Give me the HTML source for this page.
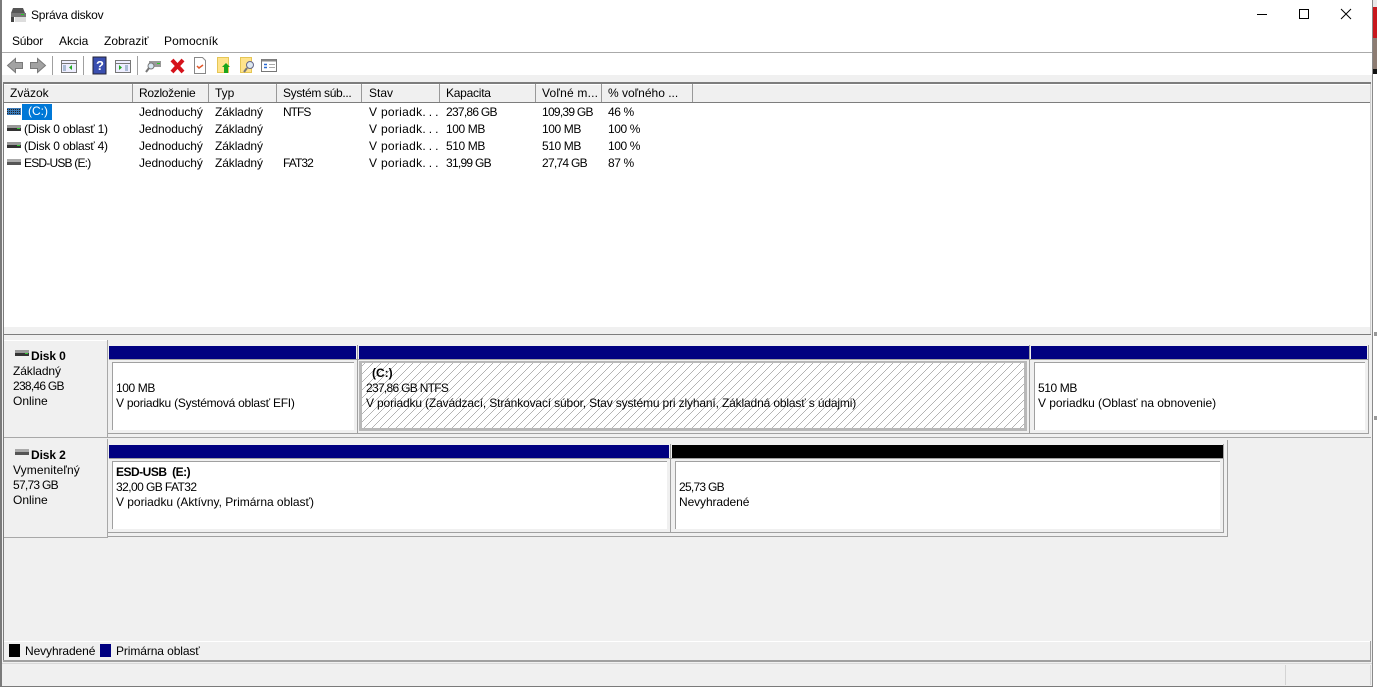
<!DOCTYPE html>
<html><head><meta charset="utf-8">
<style>
html,body{margin:0;padding:0;width:1377px;height:687px;overflow:hidden;background:#fff}
body{position:relative;font-family:"Liberation Sans",sans-serif;font-size:12px;color:#000}
.a{position:absolute}
.t{position:absolute;white-space:nowrap;line-height:15px;height:15px}
.b{font-weight:bold}
.n{letter-spacing:-.73px}
.m{letter-spacing:-.4px}
.j{letter-spacing:-.1px}
.d{letter-spacing:-.24px}
.p{letter-spacing:.3px}
.p span{letter-spacing:3px}
</style></head><body>
<!-- outside right -->
<div class="a" style="left:1373px;top:0;width:4px;height:687px;background:#fff"></div>
<div class="a" style="left:1373px;top:0;width:4px;height:7px;background:#e8e8e8"></div>
<div class="a" style="left:1373px;top:7px;width:4px;height:31px;background:#c8171d"></div>
<div class="a" style="left:1373px;top:38px;width:4px;height:31px;background:#8d7c72"></div>
<div class="a" style="left:1373px;top:69px;width:4px;height:5px;background:#111"></div>
<div class="a" style="left:1374px;top:332px;width:3px;height:4px;background:#999"></div>
<div class="a" style="left:1374px;top:416px;width:3px;height:4px;background:#999"></div>
<!-- window -->
<div class="a" style="left:0;top:0;width:1373px;height:687px;background:#fff"></div>
<div class="a" style="left:0;top:0;width:2px;height:687px;background:#7a7a7a"></div>
<div class="a" style="left:1372px;top:0;width:1px;height:687px;background:#8a8a8a"></div>
<!-- title -->
<svg class="a" style="left:10px;top:7px" width="17" height="16"><path d="M3 1h10l2 5H1z" fill="#555"/><rect x="1" y="6" width="15" height="4" fill="#777"/><rect x="11" y="7" width="3" height="1" fill="#2c2"/><rect x="1" y="10" width="3" height="5" fill="#444"/><rect x="5" y="10" width="11" height="5" fill="#ddd"/></svg>
<div class="t" style="left:31px;top:8px;letter-spacing:-.23px">Správa diskov</div>
<svg class="a" style="left:1250px;top:5px" width="110" height="20" fill="none" stroke="#000"><path d="M7 9.500h10"/><rect x="49.500" y="4.500" width="9" height="9"/><path d="M91 4l10 10M101 4l-10 10"/></svg>
<!-- menu -->
<div class="t" style="left:12px;top:34px;letter-spacing:-.2px">Súbor</div>
<div class="t" style="left:59px;top:34px">Akcia</div>
<div class="t" style="left:104px;top:34px">Zobraziť</div>
<div class="t" style="left:164px;top:34px;letter-spacing:.1px">Pomocník</div>
<div class="a" style="left:2px;top:52px;width:1370px;height:1px;background:#aaa"></div>
<!-- toolbar -->
<svg class="a" style="left:0;top:53px" width="290" height="24">
<path d="M7.500 12.500l8-7v4h7v6h-7v4z" fill="#a2a2a2" stroke="#7a7a7a"/>
<path d="M45.500 12.500l-8-7v4h-7v6h7v4z" fill="#a2a2a2" stroke="#7a7a7a"/>
<path d="M52.500 3v19M83.500 3v19M137.500 3v19" stroke="#a0a0a0"/>
<rect x="61.500" y="7.500" width="15" height="12" fill="#eef" stroke="#777"/><path d="M61 10.500h16" stroke="#777"/><path d="M72 12l-3 2.500 3 2.500z" fill="#2a2"/><path d="M63 13h3M63 15h3M63 17h3" stroke="#68a"/>
<rect x="93" y="4" width="13" height="17" fill="#3a4fb0" stroke="#223"/><text x="96" y="17" font-size="13" font-weight="bold" fill="#fff">?</text>
<rect x="115.500" y="7.500" width="15" height="12" fill="#eef" stroke="#777"/><path d="M115 10.500h16" stroke="#777"/><path d="M119 12l3 2.500-3 2.500z" fill="#2a2"/><path d="M125 13h3M125 15h3M125 17h3" stroke="#68a"/>
<path d="M149 8h12v6h-12z" fill="#999"/><path d="M157 10.500h3" stroke="#2c2"/><circle cx="151" cy="13" r="3" fill="#d8e6f0" stroke="#777"/><path d="M149 15l-3 4" stroke="#777" stroke-width="2"/>
<path d="M172 7l11 12M183 7l-11 12" stroke="#d5121b" stroke-width="4"/>
<path d="M194.500 4.500h8l3 3v13h-11z" fill="#fff" stroke="#888"/><path d="M197 13l2 2 4-3" stroke="#e2582a" fill="none" stroke-width="1.500"/>
<rect x="217.500" y="4.500" width="11" height="15" fill="#ffe38c" stroke="#e5c655"/><path d="M226 10l4 4h-2v6h-4v-6h-2z" fill="#1aa51a"/>
<rect x="240.500" y="4.500" width="11" height="15" fill="#ffe38c" stroke="#e5c655"/><circle cx="250" cy="12" r="3.500" fill="#dde8f0" stroke="#668"/><path d="M247 15l-3 4" stroke="#777" stroke-width="2"/>
<rect x="261.500" y="6.500" width="15" height="12" fill="#fff" stroke="#777"/><path d="M262 7.500h14" stroke="#888" stroke-width="2"/><path d="M264 11.500h3M264 14.500h3" stroke="#2a6ad0" stroke-width="1.500"/><path d="M269 11.500h6M269 14.500h6" stroke="#aaa"/>
</svg>
<div class="a" style="left:2px;top:75px;width:1370px;height:612px;background:#f0f0f0"></div>
<div class="a" style="left:3px;top:82px;width:1368px;height:2px;background:#7d7d7d"></div>
<!-- list -->
<div class="a" style="left:4px;top:84px;width:1367px;height:243px;background:#fff"></div>
<div class="a" style="left:4px;top:84px;width:1367px;height:18px;background:#f0f0f0;border-top:1px solid #fff;box-sizing:border-box"></div>
<div class="a" style="left:3px;top:102px;width:1368px;height:1px;background:#7d7d7d"></div>
<div class="a" style="left:3px;top:84px;width:1px;height:250px;background:#7d7d7d"></div>
<div class="a" style="left:132px;top:84px;width:1px;height:18px;background:#999"></div>
<div class="a" style="left:208px;top:84px;width:1px;height:18px;background:#999"></div>
<div class="a" style="left:276px;top:84px;width:1px;height:18px;background:#999"></div>
<div class="a" style="left:361px;top:84px;width:1px;height:18px;background:#999"></div>
<div class="a" style="left:439px;top:84px;width:1px;height:18px;background:#999"></div>
<div class="a" style="left:535px;top:84px;width:1px;height:18px;background:#999"></div>
<div class="a" style="left:601px;top:84px;width:1px;height:18px;background:#999"></div>
<div class="a" style="left:692px;top:84px;width:1px;height:18px;background:#999"></div>
<div class="t" style="left:10px;top:86px">Zväzok</div>
<div class="t" style="left:139px;top:86px;letter-spacing:-.3px">Rozloženie</div>
<div class="t" style="left:215px;top:86px">Typ</div>
<div class="t" style="left:283px;top:86px;letter-spacing:-.33px">Systém súb...</div>
<div class="t" style="left:369px;top:86px">Stav</div>
<div class="t" style="left:446px;top:86px;letter-spacing:-.25px">Kapacita</div>
<div class="t" style="left:542px;top:86px;letter-spacing:.2px">Voľné m...</div>
<div class="t" style="left:608px;top:86px">% voľného ...</div>
<!-- rows -->
<svg class="a" style="left:6px;top:106px" width="16" height="62">
<rect x="1" y="2" width="14" height="7" fill="#3a7ab8"/><path d="M1 3.500h14M1 5.500h14M1 7.500h14" stroke="#222" stroke-dasharray="1 1"/>
<rect x="1" y="19" width="14" height="3" fill="#999"/><rect x="1" y="22" width="14" height="3" fill="#333"/><rect x="11" y="22" width="3" height="1" fill="#3c3"/>
<rect x="1" y="36" width="14" height="3" fill="#999"/><rect x="1" y="39" width="14" height="3" fill="#333"/><rect x="11" y="39" width="3" height="1" fill="#3c3"/>
<rect x="1" y="53" width="14" height="3" fill="#aaa"/><rect x="1" y="56" width="14" height="3" fill="#555"/>
</svg>
<div class="a" style="left:22px;top:104px;width:30px;height:16px;background:#0078d7"></div>
<div class="t" style="left:28px;top:104px;color:#fff">(C:)</div>
<div class="t d" style="left:24px;top:122px">(Disk 0 oblasť 1)</div>
<div class="t d" style="left:24px;top:139px">(Disk 0 oblasť 4)</div>
<div class="t" style="left:24px;top:156px;letter-spacing:-.8px">ESD-USB (E:)</div>
<div class="t j" style="left:139px;top:105px">Jednoduchý</div><div class="t j" style="left:215px;top:105px">Základný</div><div class="t" style="left:283px;top:105px;letter-spacing:-1px">NTFS</div><div class="t p" style="left:369px;top:105px">V poriadk<span>...</span></div><div class="t n" style="left:446px;top:105px">237,86 GB</div><div class="t n" style="left:542px;top:105px">109,39 GB</div><div class="t m" style="left:608px;top:105px">46 %</div>
<div class="t j" style="left:139px;top:122px">Jednoduchý</div><div class="t j" style="left:215px;top:122px">Základný</div><div class="t p" style="left:369px;top:122px">V poriadk<span>...</span></div><div class="t m" style="left:446px;top:122px">100 MB</div><div class="t m" style="left:542px;top:122px">100 MB</div><div class="t m" style="left:608px;top:122px">100 %</div>
<div class="t j" style="left:139px;top:139px">Jednoduchý</div><div class="t j" style="left:215px;top:139px">Základný</div><div class="t p" style="left:369px;top:139px">V poriadk<span>...</span></div><div class="t m" style="left:446px;top:139px">510 MB</div><div class="t m" style="left:542px;top:139px">510 MB</div><div class="t m" style="left:608px;top:139px">100 %</div>
<div class="t j" style="left:139px;top:156px">Jednoduchý</div><div class="t j" style="left:215px;top:156px">Základný</div><div class="t" style="left:283px;top:156px;letter-spacing:-.9px">FAT32</div><div class="t p" style="left:369px;top:156px">V poriadk<span>...</span></div><div class="t n" style="left:446px;top:156px">31,99 GB</div><div class="t n" style="left:542px;top:156px">27,74 GB</div><div class="t m" style="left:608px;top:156px">87 %</div>
<div class="a" style="left:3px;top:334px;width:1368px;height:1px;background:#7d7d7d"></div>
<div class="a" style="left:1370px;top:84px;width:1px;height:250px;background:#d0d0d0"></div>
<div class="a" style="left:3px;top:335px;width:1px;height:327px;background:#7d7d7d"></div>
<!-- disk labels -->
<div class="a" style="left:4px;top:340px;width:103px;height:1px;background:#fff"></div>
<div class="a" style="left:107px;top:340px;width:1px;height:97px;background:#a8a8a8"></div>
<div class="a" style="left:4px;top:437px;width:1367px;height:1px;background:#a8a8a8"></div>
<div class="a" style="left:107px;top:439px;width:1px;height:98px;background:#a8a8a8"></div>
<div class="a" style="left:4px;top:537px;width:104px;height:1px;background:#a8a8a8"></div>
<svg class="a" style="left:15px;top:350px" width="15" height="8"><rect width="14" height="3" fill="#999"/><rect y="3" width="14" height="3" fill="#333"/><rect x="10" y="3" width="3" height="1" fill="#3c3"/></svg>
<svg class="a" style="left:15px;top:449px" width="15" height="8"><rect width="14" height="3" fill="#aaa"/><rect y="3" width="14" height="3" fill="#555"/></svg>
<div class="t b" style="left:31px;top:349px;letter-spacing:-.1px">Disk 0</div>
<div class="t j" style="left:13px;top:364px">Základný</div>
<div class="t n" style="left:13px;top:379px">238,46 GB</div>
<div class="t" style="left:13px;top:394px">Online</div>
<div class="t b" style="left:31px;top:448px;letter-spacing:-.1px">Disk 2</div>
<div class="t" style="left:13px;top:463px;letter-spacing:.1px">Vymeniteľný</div>
<div class="t n" style="left:13px;top:478px">57,73 GB</div>
<div class="t" style="left:13px;top:493px">Online</div>
<!-- disk 0 -->
<div class="a" style="left:108px;top:433px;width:1261px;height:1px;background:#a0a0a0"></div>
<div class="a" style="left:1368px;top:345px;width:1px;height:89px;background:#a0a0a0"></div>
<div class="a" style="left:109px;top:346px;width:247px;height:13px;background:#000080"></div>
<div class="a" style="left:359px;top:346px;width:670px;height:13px;background:#000080"></div>
<div class="a" style="left:1031px;top:346px;width:336px;height:13px;background:#000080"></div>
<div class="a" style="left:109px;top:359px;width:1259px;height:1px;background:#a0a0a0"></div>
<div class="a" style="left:357px;top:345px;width:1px;height:89px;background:#a0a0a0"></div>
<div class="a" style="left:1029px;top:345px;width:1px;height:89px;background:#a0a0a0"></div>
<div class="a" style="left:112px;top:362px;width:242px;height:68px;background:#fff;border-top:1px solid #a0a0a0;border-left:1px solid #a0a0a0;box-sizing:border-box"></div>
<svg class="a" style="left:359px;top:361px" width="668" height="70" shape-rendering="crispEdges">
<defs><pattern id="h" width="8" height="8" patternUnits="userSpaceOnUse"><rect width="8" height="8" fill="#fff"/><path d="M7 0h1v1h-1zM6 1h1v1h-1zM5 2h1v1h-1zM4 3h1v1h-1zM3 4h1v1h-1zM2 5h1v1h-1zM1 6h1v1h-1zM0 7h1v1h-1z" fill="#b4b4b4"/></pattern></defs>
<rect x="0" y="0" width="668" height="70" fill="#b8b8b8"/>
<rect x="3" y="2" width="662" height="65" fill="url(#h)"/>
</svg>
<div class="a" style="left:1034px;top:362px;width:331px;height:68px;background:#fff;border-top:1px solid #a0a0a0;border-left:1px solid #a0a0a0;box-sizing:border-box"></div>
<div class="t m" style="left:116px;top:381px">100 MB</div>
<div class="t" style="left:116px;top:396px;letter-spacing:-.24px">V poriadku (Systémová oblasť EFI)</div>
<div class="t b" style="left:372px;top:366px">(C:)</div>
<div class="t" style="left:366px;top:381px;letter-spacing:-.7px">237,86 GB NTFS</div>
<div class="t" style="left:366px;top:396px;letter-spacing:-.15px">V poriadku (Zavádzací, Stránkovací súbor, Stav systému pri zlyhaní, Základná oblasť s údajmi)</div>
<div class="t m" style="left:1038px;top:381px">510 MB</div>
<div class="t" style="left:1038px;top:396px;letter-spacing:-.06px">V poriadku (Oblasť na obnovenie)</div>
<!-- disk 2 -->
<div class="a" style="left:1227px;top:440px;width:1px;height:97px;background:#a0a0a0"></div>
<div class="a" style="left:108px;top:536px;width:1120px;height:1px;background:#a0a0a0"></div>
<div class="a" style="left:108px;top:532px;width:1116px;height:1px;background:#a0a0a0"></div>
<div class="a" style="left:1223px;top:444px;width:1px;height:89px;background:#a0a0a0"></div>
<div class="a" style="left:109px;top:445px;width:560px;height:13px;background:#000080"></div>
<div class="a" style="left:672px;top:445px;width:551px;height:13px;background:#000"></div>
<div class="a" style="left:109px;top:458px;width:1114px;height:1px;background:#a0a0a0"></div>
<div class="a" style="left:670px;top:444px;width:1px;height:89px;background:#a0a0a0"></div>
<div class="a" style="left:112px;top:461px;width:555px;height:68px;background:#fff;border-top:1px solid #a0a0a0;border-left:1px solid #a0a0a0;box-sizing:border-box"></div>
<div class="a" style="left:675px;top:461px;width:545px;height:68px;background:#fff;border-top:1px solid #a0a0a0;border-left:1px solid #a0a0a0;box-sizing:border-box"></div>
<div class="t b" style="left:116px;top:465px;letter-spacing:-.5px">ESD-USB&nbsp; (E:)</div>
<div class="t" style="left:116px;top:480px;letter-spacing:-.57px">32,00 GB FAT32</div>
<div class="t" style="left:116px;top:495px;letter-spacing:-.03px">V poriadku (Aktívny, Primárna oblasť)</div>
<div class="t n" style="left:679px;top:480px">25,73 GB</div>
<div class="t j" style="left:679px;top:495px">Nevyhradené</div>
<!-- legend -->
<div class="a" style="left:4px;top:641px;width:1366px;height:1px;background:#fff"></div>
<div class="a" style="left:3px;top:660px;width:1368px;height:2px;background:#a0a0a0"></div>
<div class="a" style="left:1370px;top:641px;width:1px;height:20px;background:#a0a0a0"></div>
<div class="a" style="left:9px;top:644px;width:11px;height:13px;background:#000"></div>
<div class="a" style="left:100px;top:644px;width:11px;height:13px;background:#000080"></div>
<div class="t j" style="left:25px;top:644px">Nevyhradené</div>
<div class="t j" style="left:116px;top:644px">Primárna oblasť</div>
<!-- status -->
<div class="a" style="left:2px;top:663px;width:1370px;height:1px;background:#d8d8d8"></div>
<div class="a" style="left:1285px;top:665px;width:1px;height:20px;background:#d4d4d4"></div>
<div class="a" style="left:1370px;top:665px;width:1px;height:20px;background:#d4d4d4"></div>
<div class="a" style="left:0;top:686px;width:1373px;height:1px;background:#7a7a7a"></div>
</body></html>
